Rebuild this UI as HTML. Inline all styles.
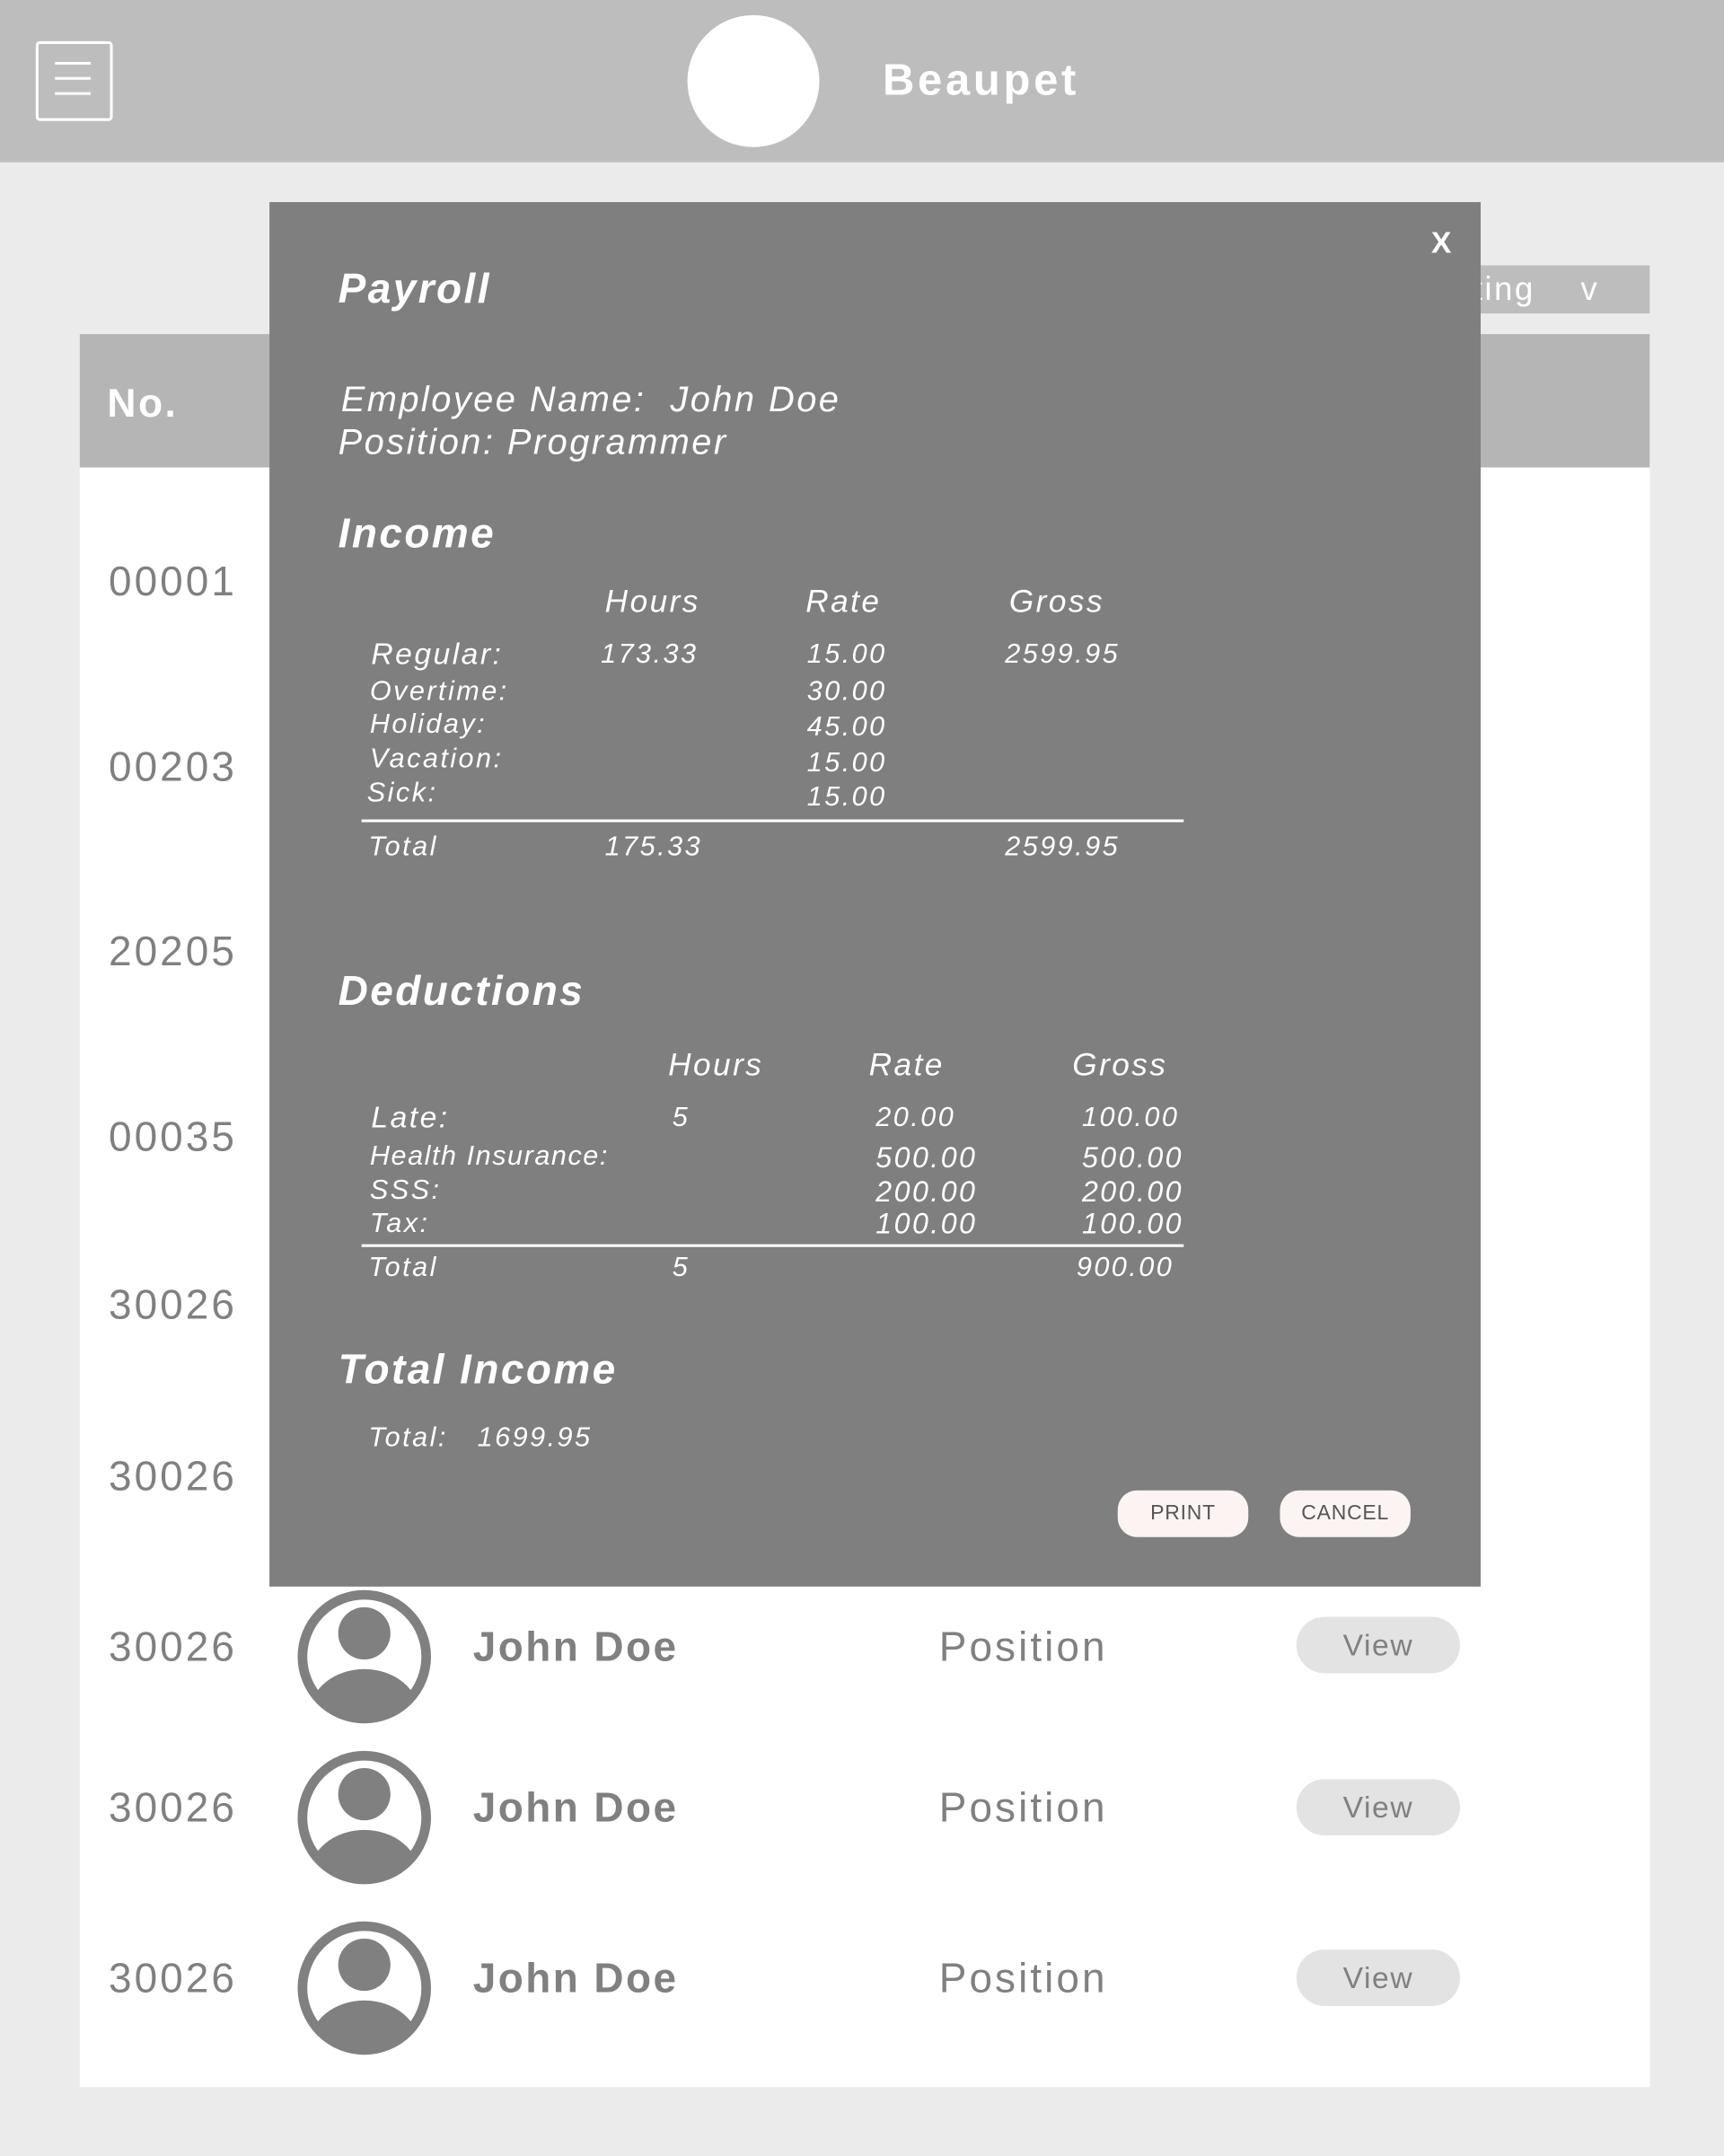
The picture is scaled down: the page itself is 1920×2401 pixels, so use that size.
<!DOCTYPE html>
<html><head><meta charset="utf-8"><style>
html,body{margin:0;padding:0;}
body{width:1920px;height:2400px;overflow:hidden;background:#ebebeb;font-family:"Liberation Sans",sans-serif;}
#s{position:absolute;left:0;top:0;width:1254px;height:1568px;transform:scale(1.53110);transform-origin:0 0;}
.a{position:absolute;white-space:nowrap;line-height:1;letter-spacing:1.6px;}
.m{color:#fff;font-style:italic;}
.b{font-weight:bold;}
.g{color:#808080;letter-spacing:2px;}
.btn{position:absolute;background:#fbf4f3;border-radius:14px;color:#555;font-size:15px;text-align:center;line-height:34px;height:34px;width:95px;letter-spacing:0.5px;}
.view{position:absolute;left:943px;width:119px;height:41px;border-radius:21px;background:#e3e3e3;color:#808080;font-size:22px;text-align:center;line-height:41px;letter-spacing:1px;}
</style></head><body><div id="s">
<div style="position:absolute;left:0;top:0;width:1254px;height:118px;background:#bdbdbd"></div>
<div style="position:absolute;left:26px;top:30px;width:52px;height:54px;border:2px solid #fff;border-radius:3px"></div>
<div style="position:absolute;left:40px;top:45px;width:26px;height:2px;background:#fff;box-shadow:0 11px 0 #fff,0 22px 0 #fff"></div>
<div style="position:absolute;left:500px;top:11px;width:96px;height:96px;border-radius:50%;background:#fff"></div>
<div class="a b" style="left:642px;top:42px;font-size:32px;color:#fff;letter-spacing:2.4px">Beaupet</div>
<div style="position:absolute;left:1040px;top:193px;width:160px;height:35px;background:#bdbdbd"></div>
<div class="a" style="left:1062px;top:199px;font-size:24px;color:#fff">rting &nbsp;&nbsp;&nbsp;v</div>
<div style="position:absolute;left:58px;top:243px;width:1142px;height:1275px;background:#fff"></div>
<div style="position:absolute;left:58px;top:243px;width:1142px;height:97px;background:#b5b5b5"></div>
<div class="a b" style="left:78px;top:280px;font-size:29px;color:#fff">No.</div>
<div class="a g" style="left:79px;top:409px;font-size:30px">00001</div>
<div class="a g" style="left:79px;top:544px;font-size:30px">00203</div>
<div class="a g" style="left:79px;top:678px;font-size:30px">20205</div>
<div class="a g" style="left:79px;top:813px;font-size:30px">00035</div>
<div class="a g" style="left:79px;top:935px;font-size:30px">30026</div>
<div class="a g" style="left:79px;top:1060px;font-size:30px">30026</div>

<div class="a g" style="left:79px;top:1184px;font-size:30px">30026</div>
<div class="a g" style="left:79px;top:1301px;font-size:30px">30026</div>
<div class="a g" style="left:79px;top:1425px;font-size:30px">30026</div>
<svg style="position:absolute;left:215px;top:1155px" width="100" height="100" viewBox="0 0 100 100"><defs><clipPath id="c"><circle cx="50" cy="50" r="45"/></clipPath></defs><circle cx="50" cy="50" r="45" fill="none" stroke="#808080" stroke-width="7"/><circle cx="50" cy="33" r="19" fill="#808080"/><ellipse cx="50" cy="92" rx="40" ry="33" fill="#808080" clip-path="url(#c)"/></svg>
<svg style="position:absolute;left:215px;top:1272px" width="100" height="100" viewBox="0 0 100 100"><circle cx="50" cy="50" r="45" fill="none" stroke="#808080" stroke-width="7"/><circle cx="50" cy="33" r="19" fill="#808080"/><ellipse cx="50" cy="92" rx="40" ry="33" fill="#808080" clip-path="url(#c)"/></svg>
<svg style="position:absolute;left:215px;top:1396px" width="100" height="100" viewBox="0 0 100 100"><circle cx="50" cy="50" r="45" fill="none" stroke="#808080" stroke-width="7"/><circle cx="50" cy="33" r="19" fill="#808080"/><ellipse cx="50" cy="92" rx="40" ry="33" fill="#808080" clip-path="url(#c)"/></svg>
<div class="a g b" style="left:344px;top:1184px;font-size:30px;letter-spacing:1.6px">John Doe</div>
<div class="a g b" style="left:344px;top:1301px;font-size:30px;letter-spacing:1.6px">John Doe</div>
<div class="a g b" style="left:344px;top:1425px;font-size:30px;letter-spacing:1.6px">John Doe</div>
<div class="a g" style="left:683px;top:1184px;font-size:30px">Position</div>
<div class="a g" style="left:683px;top:1301px;font-size:30px">Position</div>
<div class="a g" style="left:683px;top:1425px;font-size:30px">Position</div>
<div class="view" style="top:1176px">View</div>
<div class="view" style="top:1294px">View</div>
<div class="view" style="top:1418px">View</div>

<div style="position:absolute;left:196px;top:147px;width:881px;height:1007px;background:#7f7f7f"></div>
<div class="a b" style="left:1041px;top:166px;font-size:22px;color:#fff">X</div>
<div class="a m b" style="left:246px;top:196px;font-size:30px">Payroll</div>
<div class="a m" style="left:248px;top:277px;font-size:26px">Employee Name:&nbsp; John Doe</div>
<div class="a m" style="left:246px;top:308px;font-size:26px">Position: Programmer</div>
<div class="a m b" style="left:246px;top:374px;font-size:30px">Income</div>
<div class="a m" style="left:440px;top:426px;font-size:23px">Hours</div>
<div class="a m" style="left:586px;top:426px;font-size:23px">Rate</div>
<div class="a m" style="left:734px;top:426px;font-size:23px">Gross</div>
<div class="a m" style="left:270px;top:465px;font-size:22px">Regular:</div>
<div class="a m" style="left:437px;top:466px;font-size:20px">173.33</div>
<div class="a m" style="left:587px;top:466px;font-size:20px">15.00</div>
<div class="a m" style="left:731px;top:466px;font-size:20px">2599.95</div>
<div class="a m" style="left:269px;top:493px;font-size:20px">Overtime:</div>
<div class="a m" style="left:587px;top:493px;font-size:20px">30.00</div>
<div class="a m" style="left:269px;top:517px;font-size:20px">Holiday:</div>
<div class="a m" style="left:587px;top:519px;font-size:20px">45.00</div>
<div class="a m" style="left:269px;top:542px;font-size:20px">Vacation:</div>
<div class="a m" style="left:587px;top:545px;font-size:20px">15.00</div>
<div class="a m" style="left:267px;top:567px;font-size:20px">Sick:</div>
<div class="a m" style="left:587px;top:570px;font-size:20px">15.00</div>
<div style="position:absolute;left:263px;top:596px;width:598px;height:2px;background:#fff"></div>
<div class="a m" style="left:268px;top:606px;font-size:20px">Total</div>
<div class="a m" style="left:440px;top:606px;font-size:20px">175.33</div>
<div class="a m" style="left:731px;top:606px;font-size:20px">2599.95</div>
<div class="a m b" style="left:246px;top:707px;font-size:30px">Deductions</div>
<div class="a m" style="left:486px;top:763px;font-size:23px">Hours</div>
<div class="a m" style="left:632px;top:763px;font-size:23px">Rate</div>
<div class="a m" style="left:780px;top:763px;font-size:23px">Gross</div>
<div class="a m" style="left:270px;top:802px;font-size:22px">Late:</div>
<div class="a m" style="left:489px;top:803px;font-size:20px">5</div>
<div class="a m" style="left:637px;top:803px;font-size:20px">20.00</div>
<div class="a m" style="left:787px;top:803px;font-size:20px">100.00</div>
<div class="a m" style="left:269px;top:831px;font-size:20px;letter-spacing:1px">Health Insurance:</div>
<div class="a m" style="left:637px;top:832px;font-size:21px">500.00</div>
<div class="a m" style="left:787px;top:832px;font-size:21px">500.00</div>
<div class="a m" style="left:269px;top:856px;font-size:20px">SSS:</div>
<div class="a m" style="left:637px;top:857px;font-size:21px">200.00</div>
<div class="a m" style="left:787px;top:857px;font-size:21px">200.00</div>
<div class="a m" style="left:269px;top:880px;font-size:20px">Tax:</div>
<div class="a m" style="left:637px;top:880px;font-size:21px">100.00</div>
<div class="a m" style="left:787px;top:880px;font-size:21px">100.00</div>
<div style="position:absolute;left:263px;top:905px;width:598px;height:2px;background:#fff"></div>
<div class="a m" style="left:268px;top:912px;font-size:20px">Total</div>
<div class="a m" style="left:489px;top:912px;font-size:20px">5</div>
<div class="a m" style="left:783px;top:912px;font-size:20px">900.00</div>
<div class="a m b" style="left:246px;top:982px;font-size:30px">Total Income</div>
<div class="a m" style="left:268px;top:1036px;font-size:20px">Total:&nbsp;&nbsp; 1699.95</div>
<div class="btn" style="left:813px;top:1084px">PRINT</div>
<div class="btn" style="left:931px;top:1084px">CANCEL</div>
</div></body></html>
